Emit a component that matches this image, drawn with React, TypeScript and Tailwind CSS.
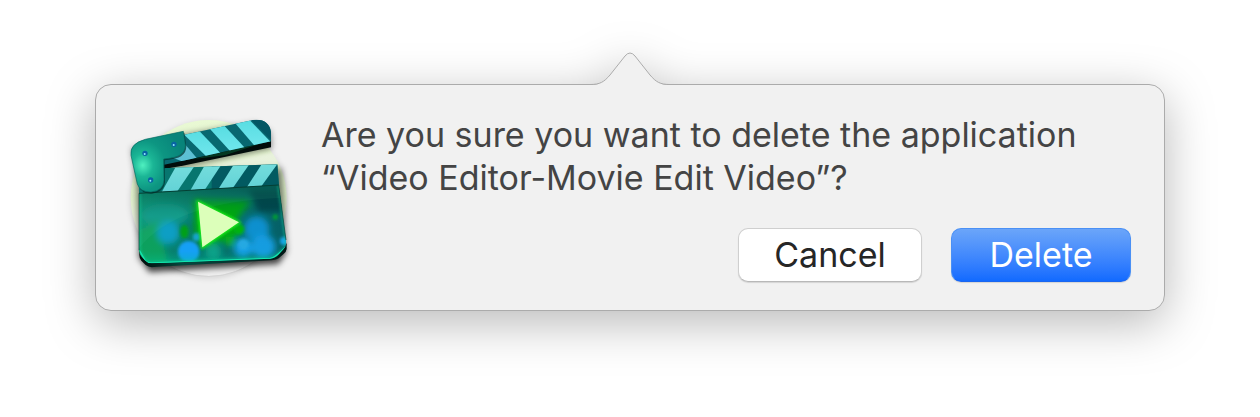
function PopoverArrow() {
  return (
    <svg
      className="absolute left-1/2 bottom-full -mb-px -translate-x-1/2"
      width="80" height="34" viewBox="0 0 80 34" fill="none" aria-hidden="true"
    >
      <path
        d="M0 34V33C10 33 14 30 20 23L35 4Q40 -2 45 4L60 23C66 30 70 33 80 33V34Z"
        fill="#f1f1f1"
      />
      <path
        d="M0 32.5C10 32.5 14 30 20 23L35 4Q40 -2 45 4L60 23C66 30 70 32.5 80 32.5"
        stroke="#ababab"
      />
    </svg>
  )
}

function ClapperIcon() {
  return (
    <svg className="shrink-0" width="190" height="185" viewBox="0 0 570 555" role="img" aria-label="Video Editor">
      <defs>
        <linearGradient id="disc" x1="0" y1="0" x2="0" y2="1">
          <stop offset="0" stopColor="#e9f9d4" />
          <stop offset=".5" stopColor="#dff0cb" />
          <stop offset=".8" stopColor="#efefef" />
        </linearGradient>
        <linearGradient id="board" x1="0" y1="0" x2="1" y2=".2">
          <stop offset="0" stopColor="#0c9a78" />
          <stop offset=".5" stopColor="#05766a" />
          <stop offset="1" stopColor="#056068" />
        </linearGradient>
        <linearGradient id="boardFade" x1="0" y1="0" x2="0" y2="1">
          <stop offset="0" stopColor="#003f34" stopOpacity=".6" />
          <stop offset=".4" stopColor="#006c60" stopOpacity="0" />
          <stop offset=".8" stopColor="#00b090" stopOpacity=".05" />
          <stop offset="1" stopColor="#00d8a0" stopOpacity=".6" />
        </linearGradient>
        <radialGradient id="hinge" cx=".22" cy=".56" r=".75">
          <stop offset="0" stopColor="#4ff0c0" />
          <stop offset=".25" stopColor="#1bb696" />
          <stop offset=".55" stopColor="#0d9682" />
          <stop offset="1" stopColor="#08847a" />
        </radialGradient>
        <linearGradient id="stripe" x1="0" y1="0" x2="0" y2="1">
          <stop offset="0" stopColor="#58dde2" />
          <stop offset="1" stopColor="#70e6ec" />
        </linearGradient>
        <linearGradient id="stripeLow" x1="0" y1="0" x2="0" y2="1">
          <stop offset="0" stopColor="#74dddc" />
          <stop offset="1" stopColor="#62d2d6" />
        </linearGradient>
        <linearGradient id="edge" x1="0" y1="0" x2="1" y2="0">
          <stop offset="0" stopColor="#020b0a" />
          <stop offset=".3" stopColor="#05483f" />
          <stop offset=".7" stopColor="#04302c" />
          <stop offset="1" stopColor="#021614" />
        </linearGradient>
        <clipPath id="armClip">
          <path d="M140 98L205 90L414 45Q462 40 468 82L468 109L225 163L144 180Z" />
        </clipPath>
        <clipPath id="barClip">
          <path d="M70 192L487 178L492 241L72 265Z" />
        </clipPath>
        <clipPath id="boardClip">
          <path d="M72 265L491 240L513 405Q516 422 505 433L489 451Q481 460 466 461L110 475Q98 475 90 466L79 454Q73 447 73 436Z" />
        </clipPath>
        <filter id="soft" x="-30%" y="-30%" width="160%" height="160%"><feGaussianBlur stdDeviation="10" /></filter>
        <filter id="tight" x="-30%" y="-30%" width="160%" height="160%"><feGaussianBlur stdDeviation="5" /></filter>
      </defs>

      {/* round backdrop */}
      <circle cx="281" cy="284" r="234" fill="#000" opacity=".14" filter="url(#soft)" />
      <circle cx="281" cy="279" r="234" fill="url(#disc)" />
      <path d="M130 460A234 234 0 0 0 432 458" fill="none" stroke="#d0d0d0" strokeWidth="2" />

      {/* shadow under the clapper */}
      <g fill="#000" filter="url(#soft)">
        <path d="M50 130L200 90L420 55L465 80L470 130L140 200L500 190L516 440L490 475L105 502L70 460L65 240Z" opacity=".5" />
        <path d="M75 440H514L490 478L100 500Z" opacity=".5" />
      </g>
      <path d="M215 198L485 140L487 180L150 192Z" fill="#eee" opacity=".4" filter="url(#tight)" />

      {/* top arm */}
      <path d="M144 170L468 104V127L210 181L144 193Z" fill="#020d0b" />
      <path d="M230 163L440 115L330 151Z" fill="#064b2c" opacity=".7" />
      <g clipPath="url(#armClip)">
        <rect x="130" y="30" width="350" height="170" fill="#086870" />
        <g fill="url(#stripe)">
          <path d="M203 85L253 78L317 145L275 155Z" />
          <path d="M283 70L328 62L390 129L347 140Z" />
          <path d="M360 54L403 44L468 112L420 124Z" />
        </g>
        <path d="M202 108L245 159L205 170L165 155Z" fill="#5cc0d4" />
        <path d="M403 40H475V112Z" fill="#035764" />
      </g>

      {/* lower striped bar */}
      <g clipPath="url(#barClip)">
        <rect x="60" y="170" width="440" height="100" fill="#07766f" />
        <rect x="290" y="170" width="210" height="100" fill="#02515c" opacity=".75" />
        <g fill="url(#stripeLow)">
          <path d="M182 186L238 184L187 259L139 263Z" />
          <path d="M268 183L318 181L269 255L225 258Z" />
          <path d="M355 181L402 179L353 250L309 254Z" />
          <path d="M440 178L488 176L438 245L394 249Z" />
        </g>
      </g>

      {/* board */}
      <path d="M73 430L110 470L466 457L515 415V432Q514 441 505 448L491 460Q485 465 470 466L117 486Q101 488 92 480L79 467Q73 461 73 450Z" fill="url(#edge)" />
      <g clipPath="url(#boardClip)">
        <rect x="60" y="230" width="470" height="260" fill="url(#board)" />
        <g filter="url(#soft)">
          <ellipse cx="150" cy="330" rx="70" ry="34" fill="#0d9688" />
          <path d="M60 380L130 350L160 480H60Z" fill="#08a05c" />
          <path d="M400 255H520V320H430Z" fill="#033f48" />
          <path d="M235 282L410 286L360 350L382 385L270 430L240 390Z" fill="#00a80e" />
          <circle cx="160" cy="383" r="34" fill="#0b9fc6" />
          <circle cx="425" cy="372" r="38" fill="#0f90d0" />
          <circle cx="385" cy="430" r="28" fill="#149fea" />
          <circle cx="445" cy="425" r="36" fill="#149ce4" />
          <circle cx="345" cy="408" r="16" fill="#0bb01c" />
          <circle cx="295" cy="440" r="24" fill="#0ca088" />
        </g>
        <g filter="url(#tight)">
          <circle cx="221" cy="440" r="32" fill="#179ffb" />
          <circle cx="245" cy="396" r="12" fill="#14a4d0" />
          <ellipse cx="208" cy="380" rx="13" ry="20" fill="#05a018" />
          <circle cx="372" cy="372" r="16" fill="#06b410" />
          <circle cx="385" cy="418" r="16" fill="#27a9e6" />
          <circle cx="507" cy="408" r="12" fill="#18a4ee" />
          <circle cx="481" cy="336" r="8" fill="#059e30" />
        </g>
        <path d="M60 265L500 240V278Q180 290 72 430Z" fill="#46c99c" opacity=".13" />
        <rect x="60" y="230" width="470" height="260" fill="url(#boardFade)" />
        <path d="M73 265V436L90 466Q98 475 110 474L466 460Q480 459 513 425V405L491 240" fill="none" stroke="#13d69e" strokeWidth="8" opacity=".5" filter="url(#tight)" />
        <path d="M73 436L90 466Q98 475 110 474L466 460Q480 459 513 425" fill="none" stroke="#13e6ae" strokeWidth="4" />
      </g>
      <path d="M72 265L491 240" stroke="#033f34" strokeWidth="3" />
      <path d="M72 265V436M491 240L513 405" stroke="#044a40" strokeWidth="2" />

      {/* hinge plate */}
      <path
        d="M91 103L205 79L211 120Q211 140 195 150Q184 158 146 162L147 225Q145 258 108 262Q76 264 67 237L48 151Q43 116 91 103Z"
        fill="#012d2a" opacity=".7" transform="translate(3 4)"
      />
      <path
        d="M91 103L205 79L211 120Q211 140 195 150Q184 158 146 162L147 225Q145 258 108 261Q76 262 67 237L48 151Q43 116 91 103Z"
        fill="url(#hinge)" stroke="#056a62" strokeWidth="2"
      />
      {[[90, 145], [177, 118], [107, 225]].map(([x, y]) => (
        <g key={x}>
          <circle cx={x} cy={y} r="8" fill="#0864a4" />
          <circle cx={x - 1} cy={y + 2} r="3" fill="#8fe8ff" />
        </g>
      ))}

      {/* play */}
      <path d="M249 290L372 352L262 427Z" fill="#19ff1e" stroke="#19e91e" strokeWidth="8" filter="url(#tight)" />
      <path d="M249 290L372 352L262 427Z" fill="#dcffba" />
    </svg>
  )
}

export default function App() {
  return (
    <main className="min-h-screen bg-white px-[95px] pt-[84px] pb-24 font-['Inter',sans-serif]">
      <div
        role="alertdialog"
        aria-labelledby="dialog-title"
        className="relative flex rounded-2xl border border-[#ababab] bg-[#f1f1f1] pt-5 pr-[33px] pb-5 pl-[19px] drop-shadow-[0_12px_24px_rgba(0,0,0,0.28)]"
      >
        <PopoverArrow />
        <ClapperIcon />
        <div className="flex min-w-0 flex-1 flex-col pt-2 pl-4">
          <h1 id="dialog-title" className="text-[34px] leading-[43px] font-normal text-[#444]">
            Are you sure you want to delete the application “Video Editor-Movie Edit Video”?
          </h1>
          <div className="mt-[29px] flex justify-end gap-[29px]">
            <button
              type="button"
              className="h-[54px] w-[184px] rounded-[10px] border border-[#cfcfcf] border-b-[#b8b8b8] bg-white text-[34px] leading-none text-[#262626] shadow-[0_1px_1px_rgba(0,0,0,0.12)]"
            >
              Cancel
            </button>
            <button
              type="button"
              className="h-[54px] w-[180px] rounded-[10px] border border-[#4a90f5] border-b-[#1a66f0] bg-linear-to-b from-[#6ba5f9] to-[#116aff] text-[34px] leading-none text-white shadow-[0_1px_1px_rgba(0,0,0,0.12)]"
            >
              Delete
            </button>
          </div>
        </div>
      </div>
    </main>
  )
}
